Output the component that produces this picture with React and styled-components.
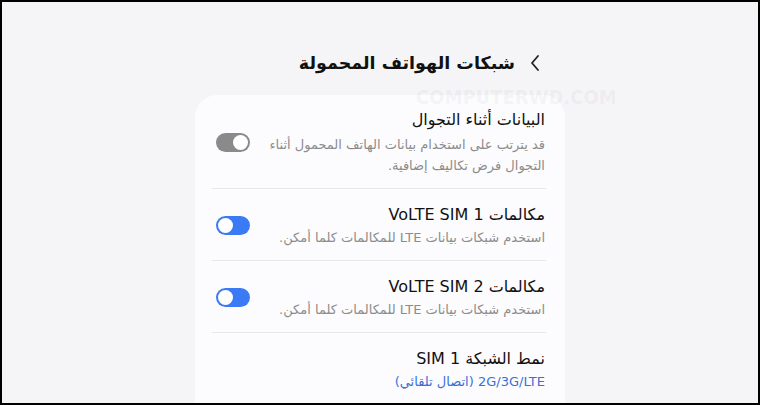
import React from 'react';
import styled, { createGlobalStyle } from 'styled-components';

const GlobalStyle = createGlobalStyle`
  html, body {
    margin: 0;
    padding: 0;
    background: #f5f5f7;
  }
  * {
    box-sizing: border-box;
  }
`;

const Frame = styled.div`
  position: relative;
  width: 760px;
  height: 405px;
  border: 2px solid #000;
  background: #f5f5f7;
  overflow: hidden;
  direction: rtl;
  font-family: "DejaVu Sans", "Noto Sans", sans-serif;
`;

const Column = styled.div`
  width: 370px;
  margin: 0 auto;
`;

const Header = styled.div`
  display: flex;
  align-items: center;
  gap: 14px;
  height: 46px;
  margin-top: 38px;
  padding-right: 24px;
  margin-bottom: 9px;
`;

const Back = styled.svg`
  width: 12px;
  height: 18px;
  flex: none;
`;

const Title = styled.h1`
  margin: 0;
  font-size: 17.5px;
  font-weight: bold;
  color: #111;
`;

const Card = styled.div`
  background: #fcfcfe;
  border-radius: 22px 22px 0 0;
  padding-top: 1px;
  height: 320px;
`;

const Row = styled.div`
  display: flex;
  align-items: center;
  justify-content: space-between;
  padding: ${(p) => (p.$first ? '12px' : '14px')} 20px 12px 21px;
`;

const Texts = styled.div`
  display: flex;
  flex-direction: column;
  max-width: 280px;
`;

const RowTitle = styled.div`
  font-size: 16px;
  line-height: 24px;
  color: #111;
`;

const Desc = styled.div`
  margin-top: ${(p) => (p.$gap ? '2px' : '0')};
  font-size: 13px;
  line-height: 21px;
  color: ${(p) => (p.$blue ? '#3b6fd6' : '#8c8c8c')};
`;

const Track = styled.div`
  flex: none;
  display: flex;
  justify-content: ${(p) => (p.$on ? 'flex-start' : 'flex-end')};
  align-items: center;
  width: 34px;
  height: 19px;
  padding: 2px;
  border-radius: 10px;
  background: ${(p) => (p.$on ? '#3a7af5' : '#8a8a8a')};
  direction: ltr;
`;

const Knob = styled.div`
  width: 15px;
  height: 15px;
  border-radius: 50%;
  background: #fff;
`;

const Divider = styled.div`
  height: 1px;
  margin: 0 19px 0 17px;
  background: #e7e7ea;
`;

const Watermark = styled.div`
  position: absolute;
  top: 83px;
  left: 414px;
  direction: ltr;
  font-family: "DejaVu Sans Condensed", "DejaVu Sans", sans-serif;
  font-weight: bold;
  font-size: 20px;
  letter-spacing: 0;
  color: rgba(0, 0, 0, 0.055);
  pointer-events: none;
`;

const Toggle = ({ on }) => (
  <Track $on={on}>
    <Knob />
  </Track>
);

export default function App() {
  return (
    <Frame>
      <GlobalStyle />
      <Column>
        <Header>
          <Back viewBox="0 0 12 18">
            <path d="M9 2 L3 9 L9 16" fill="none" stroke="#222" strokeWidth="1.8" strokeLinecap="round" strokeLinejoin="round" />
          </Back>
          <Title>شبكات الهواتف المحمولة</Title>
        </Header>
        <Card>
          <Row $first>
            <Texts>
              <RowTitle>البيانات أثناء التجوال</RowTitle>
              <Desc $gap>قد يترتب على استخدام بيانات الهاتف المحمول أثناء التجوال فرض تكاليف إضافية.</Desc>
            </Texts>
            <Toggle on={false} />
          </Row>
          <Divider />
          <Row>
            <Texts>
              <RowTitle>مكالمات VoLTE SIM 1</RowTitle>
              <Desc>استخدم شبكات بيانات LTE للمكالمات كلما أمكن.</Desc>
            </Texts>
            <Toggle on />
          </Row>
          <Divider />
          <Row>
            <Texts>
              <RowTitle>مكالمات VoLTE SIM 2</RowTitle>
              <Desc>استخدم شبكات بيانات LTE للمكالمات كلما أمكن.</Desc>
            </Texts>
            <Toggle on />
          </Row>
          <Divider />
          <Row>
            <Texts>
              <RowTitle>نمط الشبكة SIM 1</RowTitle>
              <Desc $blue>2G/3G/LTE (اتصال تلقائي)</Desc>
            </Texts>
          </Row>
        </Card>
      </Column>
      <Watermark>COMPUTERWD.COM</Watermark>
    </Frame>
  );
}
